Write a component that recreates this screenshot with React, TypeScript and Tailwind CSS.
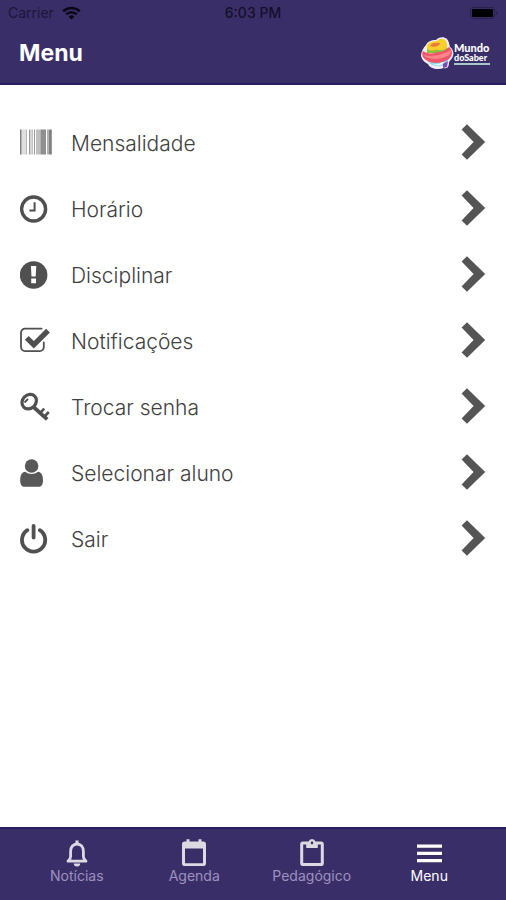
import { ReactNode, useState } from 'react';

const BarcodeIcon = () => (
    <svg className="h-[34px] w-[34px]" viewBox="0 0 34 34" fill="#606060">
        <path d="M0 3.500h1.600v25H0z" opacity=".8" />
        <path d="M2 3.500h4v25H2z" opacity=".2" />
        <path d="M6 3.500h1v25H6z" opacity=".45" />
        <path d="M9 3.500h1.400v25H9zM11.600 3.500h1v25h-1zM14 3.500h1v25h-1z" opacity=".65" />
        <path d="M16 3.500h4.500v25H16z" opacity=".4" />
        <path d="M20.500 3.500h5.500v25h-5.500z" opacity=".7" />
        <path d="M27 3.500h1v25h-1z" opacity=".5" />
        <path d="M28.400 3.500h3.400v25h-3.400z" opacity=".8" />
    </svg>
);

const ClockIcon = () => (
    <svg className="h-[34px] w-[34px]" viewBox="0 0 34 34" fill="none" stroke="#4f4f4f">
        <circle cx="13.6" cy="17" r="12" strokeWidth="3.400" />
        <path d="M14.600 10.200v8.300H9.400" strokeWidth="2" />
    </svg>
);

const AlertIcon = () => (
    <svg className="h-[34px] w-[34px]" viewBox="0 0 34 34">
        <circle cx="13.6" cy="17" r="13.8" fill="#505050" />
        <path d="M10.900 8h5.400l-.6 10.600h-4.200zM11.200 20.600h4.800v4.600h-4.800z" fill="#fff" />
    </svg>
);

const CheckIcon = () => (
    <svg className="h-[34px] w-[34px]" viewBox="0 0 34 34" fill="none" stroke="#505050">
        <path d="M21.600 4.700H5A4 4 0 0 0 1 8.700v14.400a4 4 0 0 0 4 4h14.800a4 4 0 0 0 4-4v-4.600" strokeWidth="1.800" strokeLinecap="round" />
        <path d="M6.800 13.800l7 7L28 6.600" strokeWidth="5.400" />
    </svg>
);

const KeyIcon = () => (
    <svg className="h-[34px] w-[34px]" viewBox="0 0 34 34" fill="none" stroke="#505050">
        <ellipse cx="9.2" cy="11.6" rx="7.8" ry="6.600" transform="rotate(-45 9.2 11.6)" strokeWidth="3.200" />
        <path d="M4.500 12.500l3.500-3.500" strokeWidth="1.800" />
        <path d="M13 16.500L27.200 29.400" strokeWidth="3.800" />
        <path d="M20.200 22.800l4-4.200M24.400 26.600l4.400-4.600" strokeWidth="2.600" />
    </svg>
);

const UserIcon = () => (
    <svg className="h-[34px] w-[34px]" viewBox="0 0 34 34" fill="#585858">
        <circle cx="11.6" cy="10" r="6.8" />
        <path d="M5.200 15.800c4 3 8.800 3 12.800 0 3.800.5 5 4.200 5 8.600 0 4-1.600 6.400-4.400 6.400H4.600C1.800 30.800.2 28.400.2 24.400c0-4.400 1.200-8.100 5-8.600z" />
    </svg>
);

const PowerIcon = () => (
    <svg className="h-[34px] w-[34px]" viewBox="0 0 34 34" fill="none" stroke="#505050" strokeLinecap="round">
        <path d="M7.400 8.200a11.600 11.600 0 1 0 12.400 0" strokeWidth="3.800" />
        <path d="M13.600 4v11.600" strokeWidth="3.800" />
    </svg>
);

const ChevronIcon = () => (
    <svg className="h-[38px] w-[26px]" viewBox="0 0 26 38" fill="#555">
        <path d="M7 .2L25.200 18 7 35.800 1.600 30.400 13.600 18 1.600 5.600z" />
    </svg>
);

const BellIcon = () => (
    <svg className="h-7 w-7" viewBox="0 0 28 28">
        <path d="M5 22.200c2-1.600 2.600-2.600 2.600-4.600v-5.100c0-4.600 2.600-7.500 6.400-7.500s6.400 2.900 6.400 7.500v5.100c0 2 .6 3 2.600 4.600z" fill="none" stroke="currentColor" strokeWidth="2.800" strokeLinejoin="round" />
        <path d="M12.400 1.400h3.200V5h-3.200zM10.800 24.400h6.400a3.200 3 0 0 1-6.400 0z" fill="currentColor" />
    </svg>
);

const CalendarIcon = () => (
    <svg className="h-7 w-7" viewBox="0 0 28 28" fill="currentColor" fillRule="evenodd">
        <path d="M6.500.2h3v2.200h9V.2h3v2.200h1.700A2.800 2.800 0 0 1 26 5.200v19a2.800 2.800 0 0 1-2.800 2.800H4.800A2.800 2.800 0 0 1 2 24.200v-19a2.800 2.800 0 0 1 2.800-2.800h1.700zM5 9.500v14.700h18V9.500z" />
    </svg>
);

const ClipboardIcon = () => (
    <svg className="h-7 w-7" viewBox="0 0 28 28" fill="currentColor" fillRule="evenodd">
        <path d="M10.500 2.600a3.700 3.700 0 0 1 7 0h5.500a2.800 2.800 0 0 1 2.800 2.800v18.800a2.800 2.800 0 0 1-2.800 2.800H5a2.800 2.800 0 0 1-2.800-2.800V5.400A2.800 2.800 0 0 1 5 2.600zM5.200 5.500v18.600h17.600V5.500h-3V9H8.200V5.500zM14 2.600a1.300 1.300 0 1 0 0 2.600 1.300 1.300 0 0 0 0-2.600z" />
    </svg>
);

const MenuIcon = () => (
    <svg className="h-7 w-7" viewBox="0 0 28 28" fill="currentColor">
        <path d="M2 5.600h25v3.200H2zM2 12.800h25V16H2zM2 20h25v3.200H2z" />
    </svg>
);

const LogoMark = () => (
    <svg className="h-9 w-[34px]" viewBox="0 0 34 36" aria-hidden="true">
        <path d="M6 9c1-3 5-5 10-5 2-3 8-4 11-1 2 2 2 5 3 8 3 2 4 6 3 9-1 3-3 4-4 6 0 4-1 7-5 6-6 2-14 1-16-4-4-2-6-4-7-8 0-4 2-8 5-11z" fill="#f4eefb" />
        <path d="M7 23c7 4 15 3 22-2-1 5-3 8-8 9-6 1-12-1-14-7z" fill="#8edcf0" />
        <path d="M13 28c4 1 7 0 11-3-1 4-6 6-11 3z" fill="#fff" />
        <path d="M23 28l5-3-1 6-4 1z" fill="#7a49b5" />
        <path d="M7 12v5h20l3-5z" fill="#8abf3c" />
        <path d="M3 15c4 3 10 3 15 1 5 0 8-2 11-5 4 3 4 8 0 12-7 5-18 5-23 1-3-2-5-5-3-9z" fill="#f0566b" />
        <path d="M3 19c8 2 18 1 28-5 0 3-1 5-4 6-7 4-19 4-24-1z" fill="#ff8589" />
        <path d="M7 12c-1-4 3-7 10-7 2-3 7-3 9 0 1 3 2 5 1 7-5 4-9 1-12 2-4 1-7 1-8-2z" fill="#f9cf2c" />
        <path d="M10 10c1-3 5-4 10-3 0 3-6 5-10 3z" fill="#ee7a3c" />
    </svg>
);

const Logo = () => (
    <div className="flex items-center">
        <LogoMark />
        <div className="flex w-9 flex-col font-[Lato,sans-serif] text-[11px] font-black leading-[10px] text-white">
            <span>Mundo</span>
            <span className="whitespace-nowrap text-[9px]">doSaber</span>
            <span className="h-0.5 bg-[#a8c7c9]" />
        </div>
    </div>
);

type Item = { label: string; icon: ReactNode };

const menuItems: Item[] = [
    { label: 'Mensalidade', icon: <BarcodeIcon /> },
    { label: 'Horário', icon: <ClockIcon /> },
    { label: 'Disciplinar', icon: <AlertIcon /> },
    { label: 'Notificações', icon: <CheckIcon /> },
    { label: 'Trocar senha', icon: <KeyIcon /> },
    { label: 'Selecionar aluno', icon: <UserIcon /> },
    { label: 'Sair', icon: <PowerIcon /> },
];

const tabs: Item[] = [
    { label: 'Notícias', icon: <BellIcon /> },
    { label: 'Agenda', icon: <CalendarIcon /> },
    { label: 'Pedagógico', icon: <ClipboardIcon /> },
    { label: 'Menu', icon: <MenuIcon /> },
];

const StatusBar = () => (
    <div className="grid h-[26px] grid-cols-3 items-center px-2 text-sm text-[#15102a]">
        <div className="flex items-center gap-2">
            <span className="text-[#1d1638]">Carrier</span>
            <svg className="h-[14px] w-[19px]" viewBox="0 0 19 14" fill="none" stroke="#0b0816" strokeWidth="2.500">
                <path d="M1.200 5.400a12 12 0 0 1 16.600 0M4.200 8.400a7.600 7.600 0 0 1 10.600 0" />
                <path d="M9.500 13.600L6.600 10.700a4.200 4.200 0 0 1 5.800 0z" fill="#0b0816" stroke="none" />
            </svg>
        </div>
        <span className="text-center font-medium">6:03 PM</span>
        <svg className="h-3 w-7 justify-self-end" viewBox="0 0 28 12">
            <rect x=".5" y=".5" width="24" height="11" rx="2.500" fill="none" stroke="#2a204d" />
            <rect x="2" y="2" width="21" height="8" rx="1" fill="#000" />
            <path d="M26 4c2 1 2 3 0 4z" fill="#2a204d" />
        </svg>
    </div>
);

const App = () => {
    const [active, setActive] = useState<string>('Menu');

    return (
        <div className="flex min-h-screen flex-col bg-white font-[Inter,'Liberation_Sans',sans-serif]">
            <header className="border-b-2 border-[#281e63] bg-[#3a2e69]">
                <StatusBar />
                <div className="flex h-[57px] items-center justify-between pb-0.5 pl-[19px] pr-4">
                    <h1 className="text-[23px] font-bold text-white">Menu</h1>
                    <Logo />
                </div>
            </header>

            {/* Menu options */}
            <main className="flex-1 pt-[25px]">
                <ul>
                    {menuItems.map((item) => (
                        <li key={item.label}>
                            <button type="button" className="flex h-[66px] w-full items-center px-5 text-left">
                                {item.icon}
                                <span className="ml-[17px] flex-1 pt-0.5 text-[21px] font-light text-[#404040]">{item.label}</span>
                                <ChevronIcon />
                            </button>
                        </li>
                    ))}
                </ul>
            </main>

            {/* Bottom tabs */}
            <nav className="grid h-[73px] grid-cols-4 border-t-2 border-[#281e63] bg-[#3a2e69] px-[18px]">
                {tabs.map((tab) => (
                    <button
                        key={tab.label}
                        type="button"
                        onClick={() => setActive(tab.label)}
                        className={`flex flex-col items-center pt-2.5 ${active === tab.label ? 'text-white' : 'text-[#dcd9e2]'}`}
                    >
                        {tab.icon}
                        <span className={`text-sm leading-[18px] ${active === tab.label ? 'text-white' : 'text-[#9c92be]'}`}>{tab.label}</span>
                    </button>
                ))}
            </nav>
        </div>
    );
};

export default App;
